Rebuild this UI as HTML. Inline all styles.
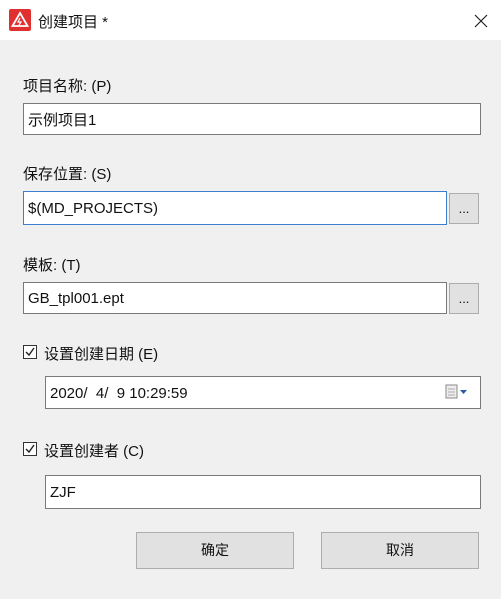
<!DOCTYPE html><html><head><meta charset="utf-8"><style>
*{box-sizing:border-box;margin:0;padding:0}
body{width:501px;height:599px;background:#f0f0f0;font-family:"Liberation Sans","Noto Sans CJK SC",sans-serif;font-size:15px;color:#111;position:relative;overflow:hidden}
.a{position:absolute}
.tb{left:0;top:0;width:501px;height:40px;background:#fff}
.inp{position:absolute;background:#fff;border:1px solid #7a7a7a;padding-left:4px;font-size:15px;display:flex;align-items:center;padding-top:1px}
.dots{position:absolute;width:30px;height:31px;background:#e1e1e1;border:1px solid #adadad;text-align:center;font-size:13px;line-height:30px}
.btn{position:absolute;background:#e1e1e1;border:1px solid #adadad;text-align:center;line-height:35px;font-size:14px}
.cb{position:absolute;width:14px;height:14px;border:1px solid #333;background:#fff}
</style></head><body>
<div class="a tb"></div>
<svg class="a" style="left:9px;top:9px" width="22" height="22" viewBox="0 0 22 22"><rect width="22" height="22" rx="2" fill="#e03030"/><path d="M11 4L18.5 17H3.5Z" fill="none" stroke="#fff" stroke-width="1.8"/><path d="M11 9l-2 4h3l-2 3" fill="none" stroke="#fff" stroke-width="1.2"/></svg>
<div class="a" style="left:38px;top:11px;font-size:15px">创建项目 *</div>
<svg class="a" style="left:474px;top:14px" width="14" height="14"><path d="M1 1L13 13M13 1L1 13" stroke="#222" stroke-width="1.2"/></svg>
<div class="a" style="left:23px;top:75px">项目名称: (P)</div>
<div class="inp" style="left:23px;top:103px;width:458px;height:32px">示例项目1</div>
<div class="a" style="left:23px;top:163px">保存位置: (S)</div>
<div class="inp" style="left:23px;top:191px;width:424px;height:34px;border-color:#3c7fcf">$(MD_PROJECTS)</div>
<div class="dots" style="left:449px;top:193px">...</div>
<div class="a" style="left:23px;top:254px">模板: (T)</div>
<div class="inp" style="left:23px;top:282px;width:424px;height:32px">GB_tpl001.ept</div>
<div class="dots" style="left:449px;top:283px">...</div>
<div class="cb" style="left:23px;top:345px"></div>
<svg class="a" style="left:24px;top:346px" width="12" height="12"><path d="M2 6l3 3 5-7" fill="none" stroke="#222" stroke-width="1.4"/></svg>
<div class="a" style="left:44px;top:343px">设置创建日期 (E)</div>
<div class="inp" style="left:45px;top:376px;width:436px;height:33px">2020/&nbsp; 4/&nbsp; 9 10:29:59</div>
<svg class="a" style="left:445px;top:384px" width="30" height="16"><rect x="1" y="1" width="11" height="13" fill="#eee" stroke="#888"/><path d="M3 5h7M3 8h7M3 11h7" stroke="#aaa"/><path d="M15 6h7l-3.5 4z" fill="#2a5aa0"/></svg>
<div class="cb" style="left:23px;top:442px"></div>
<svg class="a" style="left:24px;top:443px" width="12" height="12"><path d="M2 6l3 3 5-7" fill="none" stroke="#222" stroke-width="1.4"/></svg>
<div class="a" style="left:44px;top:440px">设置创建者 (C)</div>
<div class="inp" style="left:45px;top:475px;width:436px;height:34px">ZJF</div>
<div class="btn" style="left:136px;top:532px;width:158px;height:37px">确定</div>
<div class="btn" style="left:321px;top:532px;width:158px;height:37px">取消</div>
</body></html>
